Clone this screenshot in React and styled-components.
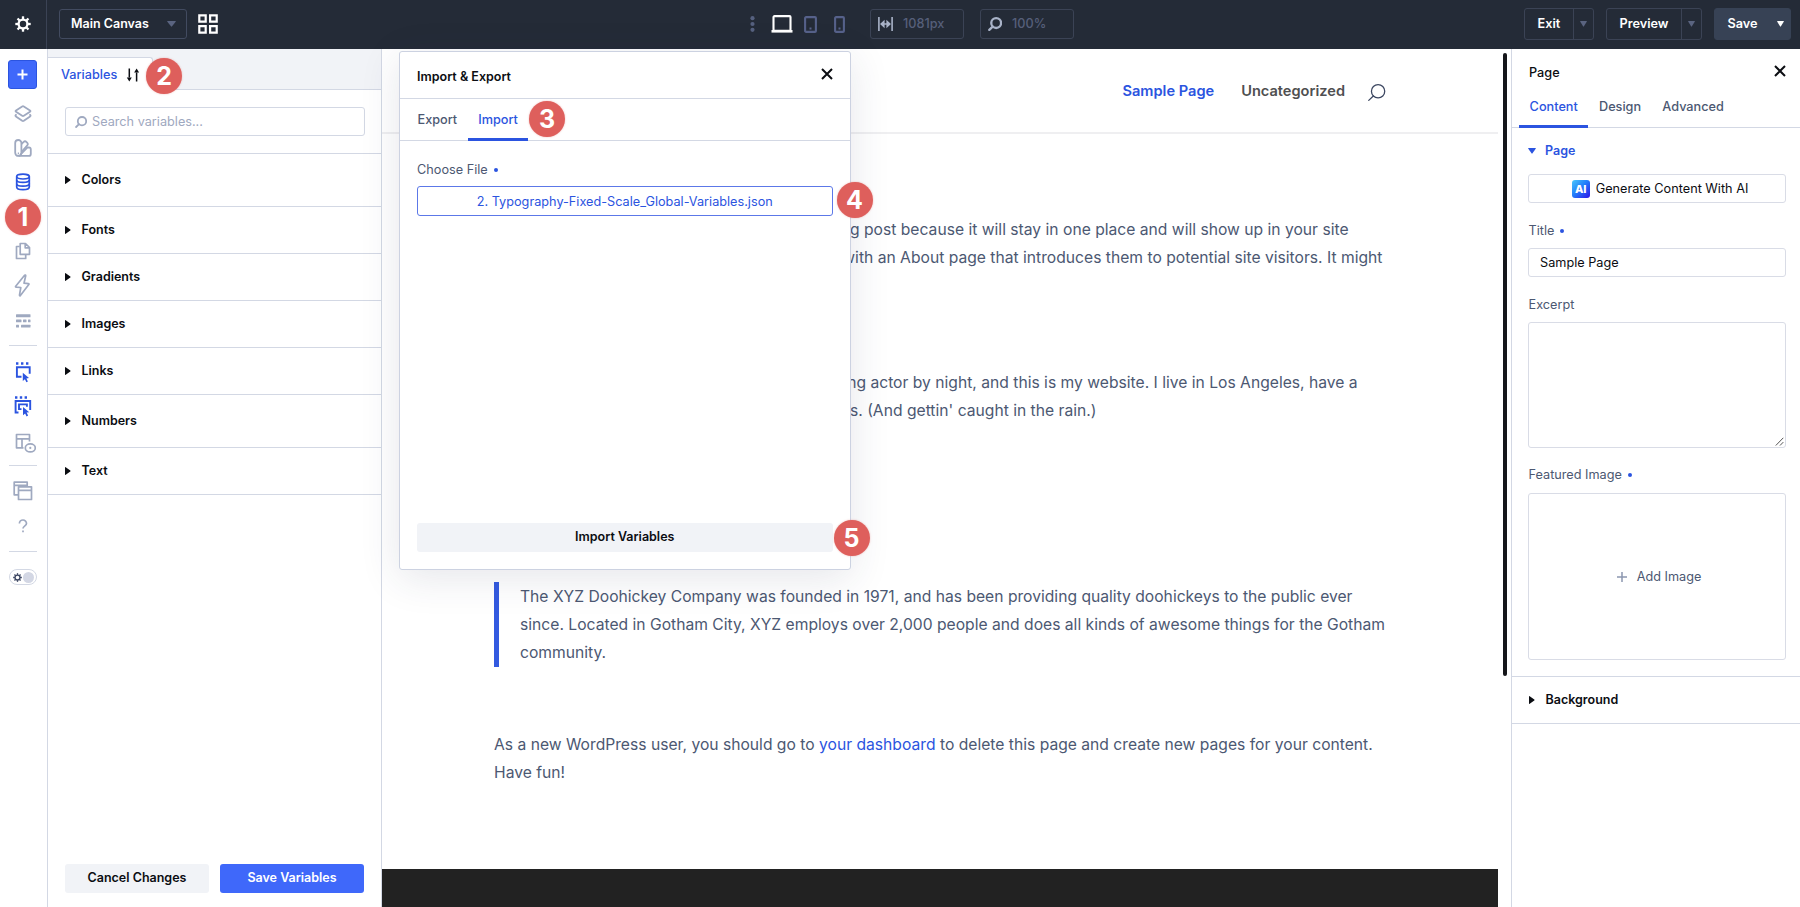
import React from "react";
import styled, { createGlobalStyle, css } from "styled-components";

const c = {
  bar: "#242b37",
  barLine: "#3b4355",
  blue: "#2b54e0",
  fill: "#3f68fa",
  slate: "#4c5872",
  muted: "#9fa9c0",
  line: "#d3d8e4",
  soft: "#f1f3f7",
  red: "#de5f5c",
};

const Global = createGlobalStyle`
  *, *::before, *::after { box-sizing: border-box; }
  body {
    margin: 0;
    overflow: hidden;
    background: #fff;
    color: #0b0d12;
    font-family: Inter, "Liberation Sans", sans-serif;
    font-size: 12.7px;
    line-height: 18px;
    -webkit-font-smoothing: antialiased;
  }
  svg { display: block; flex: none; }
`;

const Shell = styled.div`
  position: relative;
  width: 1800px;
  height: 907px;
  display: flex;
  flex-direction: column;
  overflow: hidden;
`;
const Body = styled.div`
  flex: 1;
  min-height: 0;
  display: flex;
`;

/* ---------- top bar ---------- */
const TopBar = styled.header`
  flex: none;
  height: 49px;
  display: flex;
  align-items: center;
  background: ${c.bar};
  color: #fff;
`;
const BarGroup = styled.div`
  display: flex;
  align-items: center;
  height: 100%;
  width: ${(p) => p.$w || "auto"};
  margin-left: ${(p) => (p.$end ? "auto" : 0)};
  padding-bottom: 1px;
`;
const GearCell = styled.div`
  width: 47px;
  height: 49px;
  margin-right: 12px;
  display: flex;
  align-items: center;
  justify-content: center;
  border-right: 1px solid ${c.barLine};
`;
const CanvasSelect = styled.div`
  width: 128px;
  height: 30px;
  padding: 0 10px 0 11px;
  margin-right: 11px;
  display: flex;
  align-items: center;
  justify-content: space-between;
  border: 1px solid #424b60;
  border-radius: 3px;
  font-size: 12.5px;
  font-weight: 600;
`;
const Devices = styled.div`
  display: flex;
  align-items: center;
  margin-right: 25px;
`;
const ReadBox = styled.div`
  width: 94px;
  height: 30px;
  margin-right: 16px;
  padding-left: 7px;
  display: flex;
  align-items: center;
  gap: 10px;
  border: 1px solid ${c.barLine};
  border-radius: 3px;
  color: #565f7a;
  font-weight: 500;
`;
const SplitButton = styled.div`
  width: ${(p) => p.$w}px;
  height: 32px;
  margin-right: ${(p) => p.$gap}px;
  display: flex;
  border: 1px solid ${(p) => (p.$filled ? "#374255" : c.barLine)};
  border-radius: 3px;
  background: ${(p) => (p.$filled ? "#374255" : "transparent")};
  font-weight: 600;
`;
const SplitLabel = styled.span`
  flex: 1;
  padding-left: 12.5px;
  display: flex;
  align-items: center;
`;
const SplitCaret = styled.span`
  width: 20px;
  display: flex;
  align-items: center;
  justify-content: center;
  border-left: ${(p) => (p.$line ? `1px solid ${c.barLine}` : "0")};
`;

/* ---------- icon rail ---------- */
const Rail = styled.nav`
  flex: none;
  width: 48px;
  padding: 11px 2px 0 0;
  display: flex;
  flex-direction: column;
  align-items: center;
  border-right: 1px solid ${c.line};
  color: ${c.muted};
`;
const AddButton = styled.div`
  width: 29px;
  height: 29px;
  margin-bottom: 7px;
  display: flex;
  align-items: center;
  justify-content: center;
  border-radius: 3px;
  background: ${c.fill};
  border: 1px solid ${c.blue};
  color: #fff;
`;
const Slot = styled.div`
  height: ${(p) => p.$h || 34.5}px;
  display: flex;
  align-items: center;
  justify-content: center;
  color: ${(p) => (p.$on ? c.blue : "inherit")};
`;
const RailRule = styled.div`
  width: 28px;
  height: 1px;
  background: ${c.line};
`;
const Toggle = styled.div`
  width: 28px;
  height: 16px;
  margin-top: 17px;
  padding: 0 2px 0 3px;
  display: flex;
  align-items: center;
  justify-content: space-between;
  border: 1px solid ${c.line};
  border-radius: 8px;
  color: #3d4763;
`;
const Knob = styled.span`
  width: 11px;
  height: 11px;
  border-radius: 50%;
  background: #d3d7e4;
`;

/* ---------- variables panel ---------- */
const Panel = styled.aside`
  flex: none;
  width: 334px;
  display: flex;
  flex-direction: column;
  border-right: 1px solid ${c.line};
`;
const TabStrip = styled.div`
  height: 41px;
  padding-top: 8px;
  display: flex;
  background: linear-gradient(${c.line}, ${c.line}) bottom / 100% 1px no-repeat, ${c.soft};
`;
const PanelTab = styled.div`
  width: 105px;
  padding: 1px 0 0 13px;
  display: flex;
  align-items: center;
  gap: 9px;
  background: #fff;
  border-top: 1px solid ${c.line};
  border-right: 1px solid ${c.line};
  border-top-right-radius: 3px;
  color: ${c.blue};
  font-weight: 500;
`;
const SearchWrap = styled.div`
  height: 64px;
  padding: 17px 16px 0 17px;
  border-bottom: 1px solid ${c.line};
`;
const SearchInput = styled.div`
  height: 29px;
  padding-left: 9px;
  display: flex;
  align-items: center;
  gap: 5px;
  border: 1px solid ${c.line};
  border-radius: 3px;
  color: ${c.muted};
`;
const Row = styled.div`
  height: ${(p) => p.$h}px;
  padding-left: 16.5px;
  display: flex;
  align-items: center;
  gap: 11px;
  border-bottom: 1px solid ${c.line};
  font-size: 12.5px;
  font-weight: 600;
`;
const PanelFoot = styled.div`
  margin-top: auto;
  padding: 0 17px 14px 17px;
  display: flex;
  gap: 11px;
`;
const Button = styled.div`
  flex: 1;
  height: 29px;
  padding-bottom: 1px;
  display: flex;
  align-items: center;
  justify-content: center;
  border-radius: 3px;
  font-size: 12.5px;
  font-weight: 600;
  background: ${(p) => (p.$primary ? c.fill : c.soft)};
  color: ${(p) => (p.$primary ? "#fff" : "#0b0d12")};
`;

/* ---------- page canvas ---------- */
const Canvas = styled.main`
  flex: 1;
  min-width: 0;
  display: flex;
`;
const Site = styled.div`
  width: 1116px;
  display: flex;
  flex-direction: column;
`;
const SiteHeader = styled.div`
  height: 85px;
  padding: 1px 112px 0 0;
  display: flex;
  align-items: center;
  justify-content: flex-end;
  border-bottom: 2px solid #efeff1;
  color: #4f4f51;
  font-size: 14.6px;
  font-weight: 600;
`;
const NavLink = styled.a`
  margin-right: ${(p) => p.$gap}px;
  color: ${(p) => (p.$on ? c.blue : "inherit")};
`;
const Article = styled.article`
  padding: 82px 0 0 112px;
  color: ${c.slate};
  font-size: 15.66px;
  line-height: 28px;
  white-space: nowrap;
`;
const Para = styled.p`
  margin: 0 0 ${(p) => p.$after}px;
`;
const Quote = styled.blockquote`
  margin: 0 0 ${(p) => p.$after}px;
  padding: 1px 0 0 21px;
  border-left: 5px solid #335ae0;
`;
const InlineLink = styled.a`
  color: ${c.blue};
`;
const SiteFooter = styled.div`
  margin-top: auto;
  height: 38px;
  background: #222;
`;
const ScrollThumb = styled.div`
  width: 4px;
  height: 623px;
  margin: 4px 0 0 5px;
  border-radius: 2px;
  background: #15161a;
`;

/* ---------- page settings ---------- */
const Settings = styled.aside`
  flex: none;
  width: 289px;
  border-left: 1px solid ${c.line};
`;
const SettingsHead = styled.div`
  height: 42px;
  padding: 6px 14px 0 17px;
  display: flex;
  align-items: center;
  justify-content: space-between;
  font-weight: 500;
`;
const Tabs = styled.div`
  height: ${(p) => p.$h}px;
  padding-left: ${(p) => p.$x}px;
  display: flex;
  border-bottom: 1px solid ${c.line};
`;
const Tab = styled.div`
  padding: 0 ${(p) => p.$pad || 11}px;
  padding-bottom: ${(p) => p.$drop}px;
  margin-bottom: -1px;
  display: flex;
  align-items: center;
  font-weight: 500;
  color: ${c.slate};
  ${(p) =>
    p.$on &&
    css`
      color: ${c.blue};
      box-shadow: inset 0 -3px 0 ${c.blue};
    `}
`;
const Section = styled.div`
  height: 549px;
  padding: 14px 14px 0 16px;
  border-bottom: 1px solid ${c.line};
`;
const SectionTitle = styled.div`
  margin-bottom: 14px;
  display: flex;
  align-items: center;
  gap: 9px;
  color: ${c.blue};
  font-weight: 600;
  font-size: 12.5px;
`;
const Label = styled.div`
  margin: ${(p) => p.$m};
  padding-left: 0.5px;
  display: flex;
  align-items: center;
  gap: 6px;
  color: ${c.slate};
  font-weight: 400;
  &::after {
    content: "";
    display: ${(p) => (p.$dot ? "block" : "none")};
    width: 4px;
    height: 4px;
    border-radius: 50%;
    background: ${c.blue};
  }
`;
const Field = styled.div`
  height: ${(p) => p.$h}px;
  display: flex;
  align-items: ${(p) => (p.$corner ? "flex-end" : "center")};
  justify-content: ${(p) => (p.$corner ? "flex-end" : p.$start ? "flex-start" : "center")};
  gap: ${(p) => p.$gap || 6}px;
  padding: ${(p) => p.$pad || "0 11px"};
  border: 1px solid ${(p) => (p.$active ? "#5c78e8" : "#d9dce6")};
  border-radius: 3px;
  color: ${(p) => p.$color || "#0b0d12"};
`;
const AiMark = styled.span`
  width: 18px;
  height: 18px;
  display: flex;
  align-items: center;
  justify-content: center;
  border-radius: 3px;
  background: linear-gradient(135deg, #48c8fb 0%, #2380fb 45%, #2b12e8 100%);
  color: #fff;
  font-size: 11px;
  font-weight: 800;
`;

/* ---------- dialog over the canvas ---------- */
const Dialog = styled.section`
  position: absolute;
  left: 399px;
  top: 51px;
  width: 452px;
  height: 519px;
  display: flex;
  flex-direction: column;
  background: #fff;
  border: 1px solid #ccd2e1;
  border-radius: 3px;
  box-shadow: 0 8px 40px rgba(40, 50, 80, 0.12);
`;
const DialogHead = styled.div`
  height: 47px;
  padding: 4px 17px 0;
  display: flex;
  align-items: center;
  justify-content: space-between;
  border-bottom: 1px solid ${c.line};
  font-size: 12.5px;
  font-weight: 600;
`;
const DialogBody = styled.div`
  flex: 1;
  padding: 20px 17px 17px 16.5px;
  display: flex;
  flex-direction: column;
`;
const DialogFoot = styled.div`
  display: flex;
  margin-top: auto;
`;
const Nudge = styled.span`
  display: flex;
  margin-top: ${(p) => p.$y || 0}px;
  margin-left: ${(p) => p.$x || 0}px;
`;

const Badge = styled.div`
  position: absolute;
  left: ${(p) => p.$x - 18}px;
  top: ${(p) => p.$y - 18}px;
  width: 36px;
  height: 36px;
  display: flex;
  align-items: center;
  justify-content: center;
  border-radius: 50%;
  background: ${c.red};
  box-shadow: 0 0 2px rgba(222, 95, 92, 0.45);
  color: #fff;
  font-size: 25px;
  font-weight: 700;
`;

/* ---------- icons ---------- */
const Svg = ({ w = 18, h = w, sw = 2, children, ...rest }) => (
  <svg
    width={w}
    height={h}
    viewBox={`0 0 ${w} ${h}`}
    fill="none"
    stroke="currentColor"
    strokeWidth={sw}
    strokeLinejoin="round"
    {...rest}
  >
    {children}
  </svg>
);
const teeth = [0, 45, 90, 135, 180, 225, 270, 315];
const Gear = ({ size = 16 }) => (
  <svg width={size} height={size} viewBox="0 0 16 16" fill="none" stroke="currentColor">
    <circle cx="8" cy="8" r="4.4" strokeWidth="2.3" />
    {teeth.map((a) => (
      <path key={a} d="M8 3.4V0.3" strokeWidth="2.3" transform={`rotate(${a} 8 8)`} />
    ))}
  </svg>
);
const Caret = ({ dir = "right", color = "currentColor", w = 7, h = 6 }) =>
  dir === "down" ? (
    <svg width={w} height={h} viewBox="0 0 8 6" preserveAspectRatio="none">
      <path d="M0.6 0h6.8q.7 0 .3.7L4.5 5.3q-.5.7-1 0L.3.7Q-.1 0 .6 0z" fill={color} />
    </svg>
  ) : (
    <svg width="6" height="8" viewBox="0 0 6 8">
      <path d="M0 .6v6.8q0 .8.7.3L5.3 4.5q.5-.5 0-1L.7.3Q0-.2 0 .6z" fill={color} />
    </svg>
  );
const Close = () => (
  <Svg w={12} sw={2}>
    <path d="M1 1l10 10M11 1L1 11" />
  </Svg>
);
const Lens = ({ size = 12, sw = 1.8, color }) => (
  <svg width={size} height={size} viewBox="0 0 12 12" fill="none" stroke={color || "currentColor"} strokeWidth={sw} strokeLinecap="round">
    <circle cx="7" cy="5.2" r="4.2" />
    <path d="M4 8.2L1.1 11" />
  </svg>
);
const GridIcon = () => (
  <Svg w={20} sw={2.2} strokeLinejoin="miter">
    <path d="M1.3 1.3h6.4v6.4H1.3zM12.1 1.3h6.6v6.4h-6.6zM1.3 12.1h6.4v6.6H1.3zM12.1 12.1h6.6v6.6h-6.6z" />
  </Svg>
);
const Dots = () => (
  <svg width="5" height="16" viewBox="0 0 5 16" fill="#56617f">
    <circle cx="2.5" cy="2.2" r="2.1" />
    <circle cx="2.5" cy="8" r="2.1" />
    <circle cx="2.5" cy="13.8" r="2.1" />
  </svg>
);
const Laptop = () => (
  <svg width="22" height="18" viewBox="0 0 22 18">
    <rect x="2.5" y="1.1" width="17" height="14.6" rx="1" fill="none" stroke="#fff" strokeWidth="2.1" />
    <path d="M.5 15h21v2.6H.5z" fill="#fff" />
  </svg>
);
const Tablet = ({ w }) => (
  <Svg w={w} h={17} sw={2.1} color="#56618a">
    <rect x="1.1" y="1.1" width={w - 2.2} height="14.8" rx="1" />
    <path d={`M${w / 2 - 1} 12.5h2`} strokeWidth="2" />
  </Svg>
);
const WidthIcon = () => (
  <Svg w={15} h={14} sw={1.6} color="#a9b3c8">
    <path d="M.9 0v14M14.1 0v14M4 7h7" />
    <path d="M2 7l4.6-4.2v8.4zM13 7L8.4 2.8v8.4z" fill="currentColor" stroke="none" />
  </Svg>
);
const Layers = () => (
  <Svg w={18} sw={1.8}>
    <path d="M8.2 1.4q.8-.5 1.6 0l6.2 4q1 .7 0 1.4l-6.2 4q-.8.5-1.6 0L2 6.8q-1-.7 0-1.4z" />
    <path d="M2.6 9.4l-.8.6q-.8.7.1 1.400l6.300 4.400q.8.500 1.600 0l6.300-4.400q.9-.7.1-1.400l-.8-.6" />
  </Svg>
);
const Swatches = () => (
  <Svg w={18} sw={1.8}>
    <path d="M1.2 4.1a3.1 3.1 0 0 1 6.2 0v9.7a3.1 3.1 0 0 1-6.2 0z" />
    <path d="M7.4 5l2.3-2.2a1.8 1.8 0 0 1 2.6 0l1 1a1.8 1.8 0 0 1 0 2.6L7.4 13" />
    <path d="M12.3 8.6l2.500-.2a2 2 0 0 1 2 2v4.500a2 2 0 0 1-2 2H4.500M6.400 15.600l6.600-6.800" />
    <path d="M3.800 14.300h1.200" />
  </Svg>
);
const Database = () => (
  <Svg w={16} h={18} sw={1.7}>
    <ellipse cx="8" cy="3.6" rx="6.3" ry="2.4" />
    <path d="M1.7 3.5v10.500c0 1.500 2.500 2.700 6.300 2.700s6.300-1.200 6.300-2.700V3.500" />
    <path d="M1.700 7c0 1.400 2.500 2.400 6.300 2.400s6.300-1 6.300-2.400M1.700 10.700c0 1.400 2.500 2.400 6.300 2.400s6.300-1 6.300-2.400" />
  </Svg>
);
const Files = () => (
  <Svg w={16} h={18} sw={1.7}>
    <path d="M5.2 1.5h5.3l4 4v6.800H5.2zM10.2 1.5v4.300h4.300" />
    <path d="M4.700 4.500H1.500v12h9.200v-3.700" />
  </Svg>
);
const Bolt = () => (
  <Svg w={17} h={23} sw={1.7}>
    <path d="M10.6 1.2L1.7 12.2q-.5.8.5.9l4.600.4-1.300 7.600q0 1.200.9.400l8.400-10.900q.5-.9-.5-1L10 9.200l1.700-7.500q0-1.100-1.100-.5z" />
  </Svg>
);
const Bars = () => (
  <svg width="16" height="14" viewBox="0 0 16 14" fill="currentColor">
    <rect x="1" y=".2" width="14.5" height="3" rx=".5" />
    <rect x="1" y="5.4" width="5.5" height="2.8" rx=".5" />
    <rect x="8" y="5.4" width="3.5" height="2.8" rx=".5" />
    <rect x="13" y="5.4" width="2.5" height="2.8" rx=".5" />
    <rect x="1" y="10.7" width="3" height="2.8" rx=".5" />
    <rect x="6" y="10.7" width="9.5" height="2.8" rx=".5" />
  </svg>
);
const Pointer = ({ x, y }) => (
  <path d={`M${x} ${y}l6.2 5.2-2.6.4 1.5 3-1.5.8-1.5-3-2.1 1.8z`} fill="currentColor" stroke="none" />
);
const PickOne = () => (
  <Svg w={18} h={22} sw={1.9} strokeLinejoin="miter">
    <path d="M2 1.5h2.4M7 1.5h2.4M12 1.5h2.4" strokeWidth="2.3" />
    <path d="M7.5 14.8H2.9V5.3h12.8v6.500" />
    <Pointer x={8.8} y={10.8} />
  </Svg>
);
const PickMany = () => (
  <Svg w={18} h={22} sw={1.9} strokeLinejoin="miter">
    <path d="M1 1.5h2.4M5.8 1.5h2.4M10.6 1.5H13" strokeWidth="2.3" />
    <path d="M4.5 16.500H1.600V5h14.600v9" />
    <path d="M7.500 13.100H5V8.400h7.900v2.300" />
    <Pointer x={9} y={11} />
  </Svg>
);
const TableEye = () => (
  <Svg w={21} h={20} sw={1.7}>
    <path d="M8.5 14.8H1.5V1.5h13v7M1.5 5.8h13M7 5.8v9" />
    <ellipse cx="15.3" cy="14.9" rx="5" ry="4" />
    <circle cx="15.3" cy="14.9" r="1.1" fill="currentColor" stroke="none" />
  </Svg>
);
const Windows = () => (
  <Svg w={20} h={20} sw={1.7}>
    <path d="M5.5 13.8H1.2V1.2h13v4.600M1.200 4.300h12.500" />
    <path d="M5.500 5.800h13v12.700h-13zM5.500 9.300h13" />
  </Svg>
);
const Question = () => (
  <Svg w={12} h={14} sw={1.7}>
    <path d="M2.4 4.4a3.5 3.4 0 0 1 7.1.1c0 2.3-3.5 2.4-3.5 5.1M6 11.5v1.8" />
  </Svg>
);
const Sort = () => (
  <Svg w={14} h={14} sw={1.5} color="#0b0d12">
    <path d="M3.3.6v9M10.6 13.4v-9" />
    <path d="M.8 9.6H5.8L3.3 13.4zM8.1 4.4h5L10.6.6z" fill="currentColor" stroke="none" />
  </Svg>
);
const Grip = () => (
  <Svg w={9} h={9} sw={1} color="#555">
    <path d="M.8 8.5l7.5-7.700M5 8.500l3.300-3.400" />
  </Svg>
);

const rows = [
  ["Colors", 53],
  ["Fonts", 47],
  ["Gradients", 47],
  ["Images", 47],
  ["Links", 47],
  ["Numbers", 53],
  ["Text", 47],
];
const badges = [
  [1, 23, 217],
  [2, 164, 76],
  [3, 547, 119],
  [4, 854.5, 199.5],
  [5, 851.5, 537.5],
];

export default function App() {
  return (
    <Shell>
      <Global />
      <TopBar>
        <BarGroup $w="750px">
          <GearCell>
            <Gear />
          </GearCell>
          <CanvasSelect>
            Main Canvas
            <Caret dir="down" color="#5a6480" w={9} h={6} />
          </CanvasSelect>
          <GridIcon />
        </BarGroup>
        <BarGroup>
          <Devices>
            <Dots />
            <Nudge $x={16}>
              <Laptop />
            </Nudge>
            <Nudge $x={11}>
              <Tablet w={13} />
            </Nudge>
            <Nudge $x={17}>
              <Tablet w={11} />
            </Nudge>
          </Devices>
          <ReadBox>
            <WidthIcon />
            1081px
          </ReadBox>
          <ReadBox>
            <Lens size={14} sw={2} color="#a9b3c8" />
            100%
          </ReadBox>
        </BarGroup>
        <BarGroup $end>
          <SplitButton $w={70} $gap={12}>
            <SplitLabel>Exit</SplitLabel>
            <SplitCaret $line>
              <Caret dir="down" color="#5a6480" />
            </SplitCaret>
          </SplitButton>
          <SplitButton $w={96} $gap={12}>
            <SplitLabel>Preview</SplitLabel>
            <SplitCaret $line>
              <Caret dir="down" color="#5a6480" />
            </SplitCaret>
          </SplitButton>
          <SplitButton $w={77} $gap={9} $filled>
            <SplitLabel>Save</SplitLabel>
            <SplitCaret>
              <Caret dir="down" color="#fff" />
            </SplitCaret>
          </SplitButton>
        </BarGroup>
      </TopBar>

      <Body>
        <Rail>
          <AddButton>
            <Svg w={11} sw={2}>
              <path d="M5.5 .5v10M.5 5.5h10" />
            </Svg>
          </AddButton>
          <Slot $h={35}><Layers /></Slot>
          <Slot $h={34}><Swatches /></Slot>
          <Slot $on><Database /></Slot>
          <Slot />
          <Slot><Files /></Slot>
          <Slot><Bolt /></Slot>
          <Slot $h={35}><Bars /></Slot>
          <Slot $h={7} />
          <RailRule />
          <Slot $h={9} />
          <Slot $on $h={35}><PickOne /></Slot>
          <Slot $on $h={34}><PickMany /></Slot>
          <Slot $h={38}><Nudge $x={5}><TableEye /></Nudge></Slot>
          <Slot $h={3} />
          <RailRule />
          <Slot $h={8} />
          <Slot $h={34}><Windows /></Slot>
          <Slot $h={35}><Question /></Slot>
          <Slot $h={8} />
          <RailRule />
          <Toggle>
            <Gear size={9} />
            <Knob />
          </Toggle>
        </Rail>

        <Panel>
          <TabStrip>
            <PanelTab>
              Variables
              <Sort />
            </PanelTab>
          </TabStrip>
          <SearchWrap>
            <SearchInput>
              <Lens />
              Search variables...
            </SearchInput>
          </SearchWrap>
          {rows.map(([name, h]) => (
            <Row key={name} $h={h}>
              <Caret />
              {name}
            </Row>
          ))}
          <PanelFoot>
            <Button>Cancel Changes</Button>
            <Button $primary>Save Variables</Button>
          </PanelFoot>
        </Panel>

        <Canvas>
          <Site>
            <SiteHeader>
              <NavLink $on $gap={27}>Sample Page</NavLink>
              <NavLink $gap={22}>Uncategorized</NavLink>
              <Nudge $y={2}>
                <Lens size={19} sw={0.8} color="#3b4660" />
              </Nudge>
            </SiteHeader>
            <Article>
              <Para $after={67.5}>
                This is an example page. It's different from a blog post because it will stay in one place and will show up in your site
                <br />
                navigation (in most themes). Most people start with an About page that introduces them to potential site visitors. It might
                <br />
                say something like this:
              </Para>
              <Quote $after={65}>
                Hi there! I'm a bike messenger by day, aspiring actor by night, and this is my website. I live in Los Angeles, have a
                <br />
                great dog named Jack, and I like piña coladas. (And gettin' caught in the rain.)
              </Quote>
              <Para $after={64.5}>...or something like this:</Para>
              <Quote $after={64}>
                The XYZ Doohickey Company was founded in 1971, and has been providing quality doohickeys to the public ever
                <br />
                since. Located in Gotham City, XYZ employs over 2,000 people and does all kinds of awesome things for the Gotham
                <br />
                community.
              </Quote>
              <Para $after={0}>
                As a new WordPress user, you should go to <InlineLink>your dashboard</InlineLink> to delete this page and create new pages for your content.
                <br />
                Have fun!
              </Para>
            </Article>
            <SiteFooter />
          </Site>
          <ScrollThumb />
        </Canvas>

        <Settings>
          <SettingsHead>
            Page
            <Nudge $y={-4}>
              <Close />
            </Nudge>
          </SettingsHead>
          <Tabs $h={37} $x={7}>
            <Tab $on $drop={6} $pad={10.6}>Content</Tab>
            <Tab $drop={6} $pad={10.6}>Design</Tab>
            <Tab $drop={6} $pad={10.6}>Advanced</Tab>
          </Tabs>
          <Section>
            <SectionTitle>
              <Caret dir="down" w={8} h={6} />
              Page
            </SectionTitle>
            <Field $h={29} $pad="0 8px 0 14px">
              <AiMark>AI</AiMark>
              Generate Content With AI
            </Field>
            <Label $dot $m="19px 0 8px">Title</Label>
            <Field $h={29} $start>Sample Page</Field>
            <Label $m="19px 0 8px">Excerpt</Label>
            <Field $h={126} $corner $pad="1px">
              <Grip />
            </Field>
            <Label $dot $m="18px 0 9px">Featured Image</Label>
            <Field $h={167} $color={c.slate} $gap={10} $pad="0 8px 0 12px">
              <Svg w={10} sw={1.5} color="#8c97b0">
                <path d="M5 0v10M0 5h10" />
              </Svg>
              Add Image
            </Field>
          </Section>
          <Row $h={47}>
            <Caret />
            Background
          </Row>
        </Settings>
      </Body>

      <Dialog>
        <DialogHead>
          Import &amp; Export
          <Nudge $y={-7}>
            <Close />
          </Nudge>
        </DialogHead>
        <Tabs $h={42} $x={7}>
          <Tab $drop={1} $pad={10.5}>Export</Tab>
          <Tab $on $drop={1} $pad={10.5}>Import</Tab>
        </Tabs>
        <DialogBody>
          <Label $dot $m="0 0 7px">Choose File</Label>
          <Field $h={30} $active $color={c.blue} $pad="1px 11px 0">
            2. Typography-Fixed-Scale_Global-Variables.json
          </Field>
          <DialogFoot>
            <Button>Import Variables</Button>
          </DialogFoot>
        </DialogBody>
      </Dialog>

      {badges.map(([n, x, y]) => (
        <Badge key={n} $x={x} $y={y}>
          {n}
        </Badge>
      ))}
    </Shell>
  );
}
